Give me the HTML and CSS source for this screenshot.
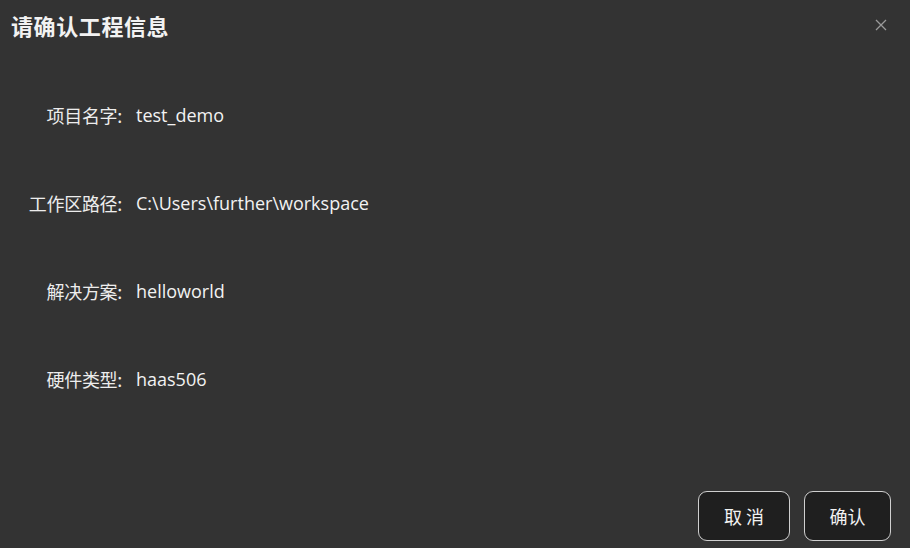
FILE: index.html
```html
<!DOCTYPE html>
<html lang="zh">
<head>
<meta charset="utf-8">
<link rel="stylesheet" href="styles.css">
</head>
<body>
<div class="dialog">
  <div class="header">
    <h1 class="title">请确认工程信息</h1>
    <button class="close" aria-label="close">
      <svg width="12" height="12" viewBox="0 0 12 12"><path d="M1 1L11 11M11 1L1 11" stroke="#9a9a9a" stroke-width="1.3" fill="none"/></svg>
    </button>
  </div>
  <div class="body">
    <div class="row"><span class="label">项目名字:</span><span class="value">test_demo</span></div>
    <div class="row"><span class="label">工作区路径:</span><span class="value">C:\Users\further\workspace</span></div>
    <div class="row"><span class="label">解决方案:</span><span class="value">helloworld</span></div>
    <div class="row"><span class="label">硬件类型:</span><span class="value">haas506</span></div>
  </div>
  <div class="footer">
    <button class="btn">取 消</button>
    <button class="btn">确认</button>
  </div>
</div>
</body>
</html>
```
FILE: styles.css
```css
html, body {
  margin: 0;
  padding: 0;
  background: #333333;
}
body {
  width: 910px;
  height: 548px;
  overflow: hidden;
  font-family: "Open Sans", "Noto Sans CJK SC", sans-serif;
  color: #f0f0f0;
}
.dialog {
  display: flex;
  flex-direction: column;
  height: 548px;
}
.header {
  display: flex;
  justify-content: space-between;
  align-items: center;
  padding: 9px 23px 0 11px;
  height: 32px;
}
.title {
  margin: 0;
  font-size: 22px;
  font-weight: 700;
  letter-spacing: 0.6px;
  font-family: "Noto Sans CJK SC", sans-serif;
  color: #f2f2f2;
}
.close {
  background: none;
  border: none;
  padding: 0;
  width: 12px;
  height: 12px;
  display: flex;
}
.body {
  display: flex;
  flex-direction: column;
  padding-top: 61px;
  gap: 63px;
}
.row {
  display: flex;
  align-items: center;
  height: 25px;
  font-size: 18px;
}
.label {
  width: 122px;
  text-align: right;
  font-family: "Noto Sans CJK SC", sans-serif;
  color: #ededed;
  letter-spacing: -0.3px;
}
.value {
  margin-left: 14px;
  color: #f2f2f2;
}
.footer {
  margin-top: auto;
  display: flex;
  justify-content: flex-end;
  gap: 14px;
  padding: 0 19px 7px 0;
}
.btn {
  height: 50px;
  min-width: 87px;
  padding: 0 20px;
  background: #1f1f1f;
  border: 1px solid #cfcfcf;
  border-radius: 9px;
  color: #f2f2f2;
  font-family: "Noto Sans CJK SC", sans-serif;
  font-size: 18px;
}
.btn:first-child {
  width: 92px;
}
```
